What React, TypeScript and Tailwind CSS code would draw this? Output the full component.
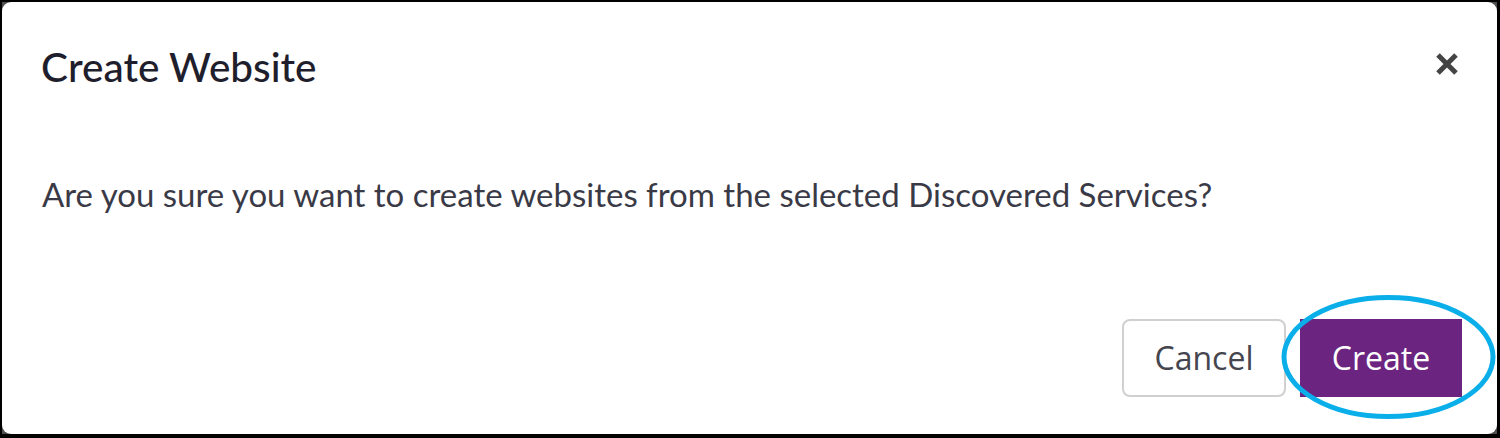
import React from "react";

export default function App() {
  return (
    <div className="h-[438px] w-full bg-black pt-[2px] pl-[2px] pr-[3px] pb-[4px]">
      <div className="h-full w-full bg-[#4f4f4f]">
        <div className="relative flex h-full w-full flex-col rounded-[9px] bg-white font-['Lato',sans-serif]">
          <div className="flex items-start justify-between pl-[39px] pr-[38px] pt-[41px]">
            <h1 className="text-[40.5px] font-medium leading-[48px] text-[#1f1e2c]">Create Website</h1>
            <button className="mt-[9px] text-[#444]" aria-label="Close">
              <svg width="24" height="24" viewBox="0 0 24 24">
                <path d="M3 3 L21 21 M21 3 L3 21" stroke="currentColor" strokeWidth="5" />
              </svg>
            </button>
          </div>

          <p className="mt-[83px] pl-[40px] text-[33px] leading-[40px] text-[#3a3a47]">
            Are you sure you want to create websites from the selected Discovered Services?
          </p>

          <div className="mt-auto flex justify-end gap-[14px] pb-[37px] pr-[35px] font-['Open_Sans',sans-serif]">
            <button className="h-[78px] w-[164px] rounded-[8px] border-2 border-[#d0d0d0] bg-white text-[32px] text-[#45454f]">
              Cancel
            </button>
            <div className="relative">
              <button className="h-[78px] w-[162px] bg-[#6b2580] text-[32px] text-white">Create</button>
              <svg
                className="pointer-events-none absolute left-[-19px] top-[-25px]"
                width="215"
                height="126"
                viewBox="0 0 215 126"
              >
                <ellipse cx="107.5" cy="63" rx="104.5" ry="59.5" fill="none" stroke="#0aaee9" strokeWidth="5" />
              </svg>
            </div>
          </div>
        </div>
      </div>
    </div>
  );
}
